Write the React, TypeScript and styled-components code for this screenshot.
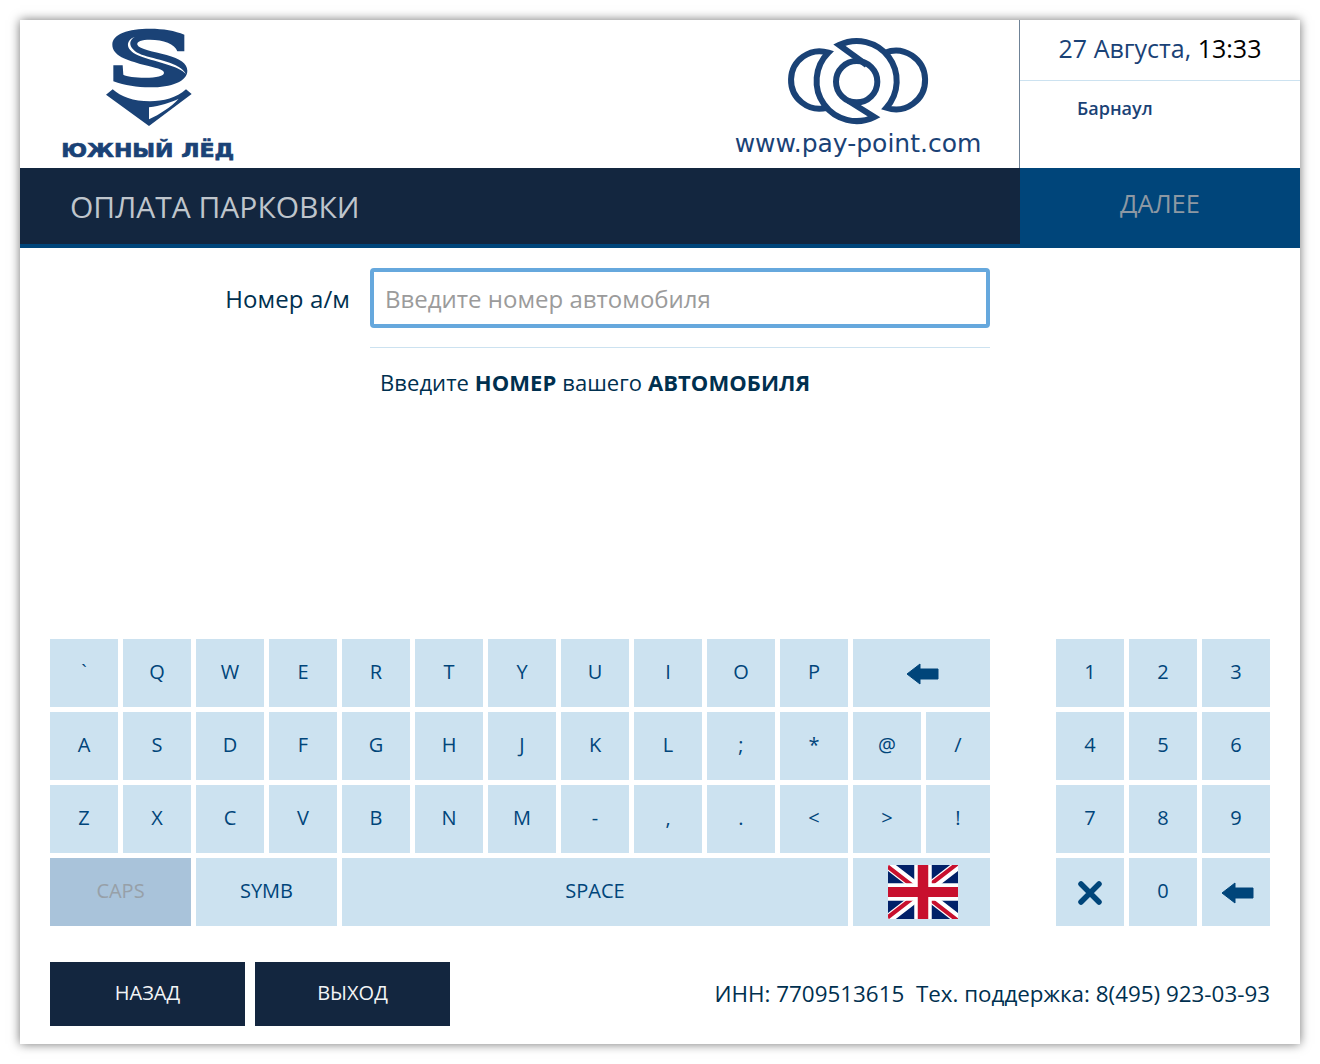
import React from "react";
import styled, { createGlobalStyle } from "styled-components";

const Global = createGlobalStyle`
  html, body { margin: 0; padding: 0; background: #fff; }
  body { font-family: "Open Sans", "Noto Sans", sans-serif; }
`;

const Page = styled.div`
  padding: 20px;
  width: 1280px;
  height: 1024px;
`;

const Card = styled.div`
  width: 1280px;
  height: 1024px;
  background: #fff;
  box-shadow: 0 0 10px rgba(0, 0, 0, 0.55);
  display: flex;
  flex-direction: column;
`;

const Header = styled.header`
  height: 148px;
  display: flex;
`;

const LogoBlock = styled.div`
  width: 256px;
  display: flex;
  flex-direction: column;
  align-items: center;
  padding-top: 4px;
  box-sizing: border-box;
`;

const LogoMark = styled.svg`
  margin-left: 4px;
`;

const LogoName = styled.div`
  font-family: "DejaVu Sans", sans-serif;
  font-weight: 700;
  font-size: 20px;
  line-height: 20px;
  color: #1a4276;
  -webkit-text-stroke: 0.7px #1a4276;
  white-space: nowrap;
  margin-top: 10px;
  transform: scaleX(1.1);
`;

const PayBlock = styled.div`
  margin-left: auto;
  width: 300px;
  margin-right: 11px;
  display: flex;
  flex-direction: column;
  align-items: center;
  padding-top: 14px;
  box-sizing: border-box;
`;

const PayUrl = styled.div`
  font-family: "DejaVu Sans", sans-serif;
  font-size: 25px;
  line-height: 30px;
  color: #1a4276;
  margin-top: 1px;
`;

const InfoBlock = styled.div`
  width: 280px;
  border-left: 1px solid #6f8296;
  display: flex;
  flex-direction: column;
`;

const DateRow = styled.div`
  height: 55px;
  padding-bottom: 5px;
  border-bottom: 1px solid #cce2f0;
  display: flex;
  align-items: center;
  justify-content: center;
  font-size: 25px;
  font-weight: 500;
  color: #1a4276;
  white-space: pre;
`;

const Time = styled.span`
  color: #000;
`;

const City = styled.div`
  padding: 15px 0 0 57px;
  font-size: 18px;
  line-height: 24px;
  font-weight: 600;
  color: #1a4276;
`;

const TitleBar = styled.div`
  height: 80px;
  display: flex;
  background: #00457a;
`;

const Title = styled.div`
  width: 1000px;
  height: 76px;
  background: #13263f;
  box-sizing: border-box;
  padding: 17px 0 0 50px;
  font-size: 30px;
  line-height: 44px;
  color: #bfc5cc;
`;

const Next = styled.div`
  width: 280px;
  text-align: center;
  font-size: 25.5px;
  line-height: 70px;
  color: #8d98a3;
`;

const Form = styled.div`
  flex: 1;
  padding-top: 20px;
  display: grid;
  grid-template-columns: 330px 620px;
  grid-auto-rows: min-content;
  column-gap: 20px;
  padding-right: 310px;
`;

const Label = styled.label`
  text-align: right;
  font-size: 24px;
  letter-spacing: 0.1px;
  line-height: 61px;
  color: #00304f;
  height: 60px;
`;

const PlateInput = styled.input`
  width: 620px;
  height: 60px;
  box-sizing: border-box;
  border: 4px solid #66a8dd;
  border-radius: 4px;
  outline: none;
  padding: 0 11px;
  font-family: inherit;
  font-size: 24px;
  color: #00304f;
  &::placeholder { color: #9b9b9b; opacity: 1; }
`;

const Divider = styled.div`
  grid-column: 2;
  height: 1px;
  background: #cce2f0;
  margin-top: 19px;
`;

const Hint = styled.div`
  grid-column: 2;
  padding: 19px 0 0 10px;
  font-size: 22px;
  letter-spacing: 0.07px;
  line-height: 30px;
  color: #00304f;
  white-space: nowrap;
  b { font-weight: 700; }
`;

const KeyboardRow = styled.div`
  display: flex;
  justify-content: space-between;
  padding: 0 30px;
`;

const Letters = styled.div`
  display: grid;
  grid-template-columns: repeat(12, 68px) 64px;
  grid-auto-rows: 68px;
  gap: 5px;
`;

const Numbers = styled.div`
  display: grid;
  grid-template-columns: repeat(3, 68px);
  grid-auto-rows: 68px;
  gap: 5px;
`;

const Key = styled.div<{ $span?: number; $off?: boolean }>`
  grid-column: span ${(p) => p.$span ?? 1};
  background: ${(p) => (p.$off ? "#a9c3da" : "#cce2f0")};
  color: ${(p) => (p.$off ? "#97a0a8" : "#00457a")};
  font-size: 20px;
  line-height: 66px;
  height: 68px;
  text-align: center;
  display: flex;
  align-items: flex-start;
  justify-content: center;
`;

const Footer = styled.footer`
  height: 118px;
  box-sizing: border-box;
  padding: 36px 30px 0;
  display: flex;
  gap: 10px;
`;

const NavButton = styled.button`
  width: 195px;
  height: 64px;
  border: 0;
  background: #13263f;
  color: #f2f4f6;
  font-family: inherit;
  font-size: 20px;
  padding: 0 0 4px;
`;

const Support = styled.div`
  margin-left: auto;
  font-size: 22.4px;
  line-height: 64px;
  color: #00304f;
  white-space: pre;
`;

const ArrowSvg = styled.svg`
  margin: 24px 0 0 2px;
`;

const CrossSvg = styled.svg`
  margin-top: 23px;
`;

const FlagSvg = styled.svg`
  margin-top: 7px;
  margin-left: 3px;
`;

function BackArrow() {
  return (
    <ArrowSvg width="33" height="22" viewBox="0 0 33 22">
      <path
        d="M1 11 L14 1 L14 6 L32 6 L32 16 L14 16 L14 21 Z"
        fill="#00457a"
        stroke="#00457a"
        strokeWidth="1"
        strokeLinejoin="round"
      />
    </ArrowSvg>
  );
}

function Cross() {
  return (
    <CrossSvg width="24" height="24" viewBox="0 0 24 24">
      <path d="M3 3 L21 21 M21 3 L3 21" stroke="#00457a" strokeWidth="5.5" strokeLinecap="round" />
    </CrossSvg>
  );
}

function UkFlag() {
  return (
    <FlagSvg width="70" height="54" viewBox="0 0 60 30" preserveAspectRatio="none">
      <rect width="60" height="30" fill="#012169" />
      <path d="M0 0 L60 30 M60 0 L0 30" stroke="#fff" strokeWidth="6" />
      <path d="M0 0 L30 15 M60 30 L30 15" stroke="#c8102e" strokeWidth="2.6" transform="translate(0 1)" />
      <path d="M60 0 L30 15 M0 30 L30 15" stroke="#c8102e" strokeWidth="2.6" transform="translate(0 -1)" />
      <path d="M30 0 V30" stroke="#fff" strokeWidth="15" />
      <path d="M0 15 H60" stroke="#fff" strokeWidth="9.6" />
      <path d="M30 0 V30" stroke="#c8102e" strokeWidth="9" />
      <path d="M0 15 H60" stroke="#c8102e" strokeWidth="5.6" />
    </FlagSvg>
  );
}

function SouthIceLogo() {
  return (
    <LogoMark width="100" height="106" viewBox="0 0 300 318">
      <path
        d="M253 32 C225 20 190 14 150 14 C85 14 37 30 37 62 C37 95 80 108 130 122 C165 131 192 135 192 146 C192 156 170 161 135 161 C105 161 80 158 70 152 L68 124 L40 124 L40 172 C75 185 110 190 150 190 C215 190 262 172 262 140 C262 118 240 104 200 93 C160 82 118 76 112 62 C110 52 125 47 150 47 C190 47 225 60 232 82 L253 82 Z"
        fill="#1a4276"
      />
      <path
        d="M105 38 C85 48 82 74 125 92 C165 106 240 114 258 150 C238 126 170 114 125 98 C72 80 76 48 105 38 Z"
        fill="#fff"
      />
      <path
        d="M38 196 C62 218 100 232 150 232 C190 232 230 222 258 196 L275 210 L147 306 L18 212 Z"
        fill="#1a4276"
      />
      <path d="M147 286 L147 250 C180 245 212 236 236 224 C212 250 180 270 147 286 Z" fill="#fff" />
    </LogoMark>
  );
}

function PayPointLogo() {
  return (
    <svg
      width="146"
      height="94"
      viewBox="0 0 438 282"
      fill="none"
      stroke="#1a4276"
      strokeWidth="18"
      strokeMiterlimit="10"
    >
      <circle cx="215" cy="143" r="62" />
      <path d="M245 93 L162.4 33.1 A120 120 0 0 1 304.2 221.3 A88 88 0 1 0 299.9 56.1" />
      <path d="M190 200 L267.6 248.9 A120 120 0 0 1 130.1 56.1 A86 86 0 1 0 125.8 221.3" />
    </svg>
  );
}

type KeyDef = { label: React.ReactNode; span?: number; off?: boolean };

const letterKeys: KeyDef[] = [
  ..."`QWERTYUIOP".split("").map((label) => ({ label })),
  { label: <BackArrow />, span: 2 },
  ..."ASDFGHJKL;*@/".split("").map((label) => ({ label })),
  ..."ZXCVBNM-,.<>!".split("").map((label) => ({ label })),
  { label: "CAPS", span: 2, off: true },
  { label: "SYMB", span: 2 },
  { label: "SPACE", span: 7 },
  { label: <UkFlag />, span: 2 },
];

const numberKeys: KeyDef[] = [
  ..."123456789".split("").map((label) => ({ label })),
  { label: <Cross /> },
  { label: "0" },
  { label: <BackArrow /> },
];

export default function App() {
  return (
    <Page>
      <Global />
      <Card>
        <Header>
          <LogoBlock>
            <SouthIceLogo />
            <LogoName>ЮЖНЫЙ ЛЁД</LogoName>
          </LogoBlock>
          <PayBlock>
            <PayPointLogo />
            <PayUrl>www.pay-point.com</PayUrl>
          </PayBlock>
          <InfoBlock>
            <DateRow>
              27 Августа, <Time>13:33</Time>
            </DateRow>
            <City>Барнаул</City>
          </InfoBlock>
        </Header>
        <TitleBar>
          <Title>ОПЛАТА ПАРКОВКИ</Title>
          <Next>ДАЛЕЕ</Next>
        </TitleBar>
        <Form>
          <Label>Номер а/м</Label>
          <PlateInput placeholder="Введите номер автомобиля" />
          <Divider />
          <Hint>
            Введите <b>НОМЕР</b> вашего <b>АВТОМОБИЛЯ</b>
          </Hint>
        </Form>
        <KeyboardRow>
          <Letters>
            {letterKeys.map((k, i) => (
              <Key key={i} $span={k.span} $off={k.off}>
                {k.label}
              </Key>
            ))}
          </Letters>
          <Numbers>
            {numberKeys.map((k, i) => (
              <Key key={i}>{k.label}</Key>
            ))}
          </Numbers>
        </KeyboardRow>
        <Footer>
          <NavButton>НАЗАД</NavButton>
          <NavButton>ВЫХОД</NavButton>
          <Support>{"ИНН: 7709513615  Тех. поддержка: 8(495) 923-03-93"}</Support>
        </Footer>
      </Card>
    </Page>
  );
}
